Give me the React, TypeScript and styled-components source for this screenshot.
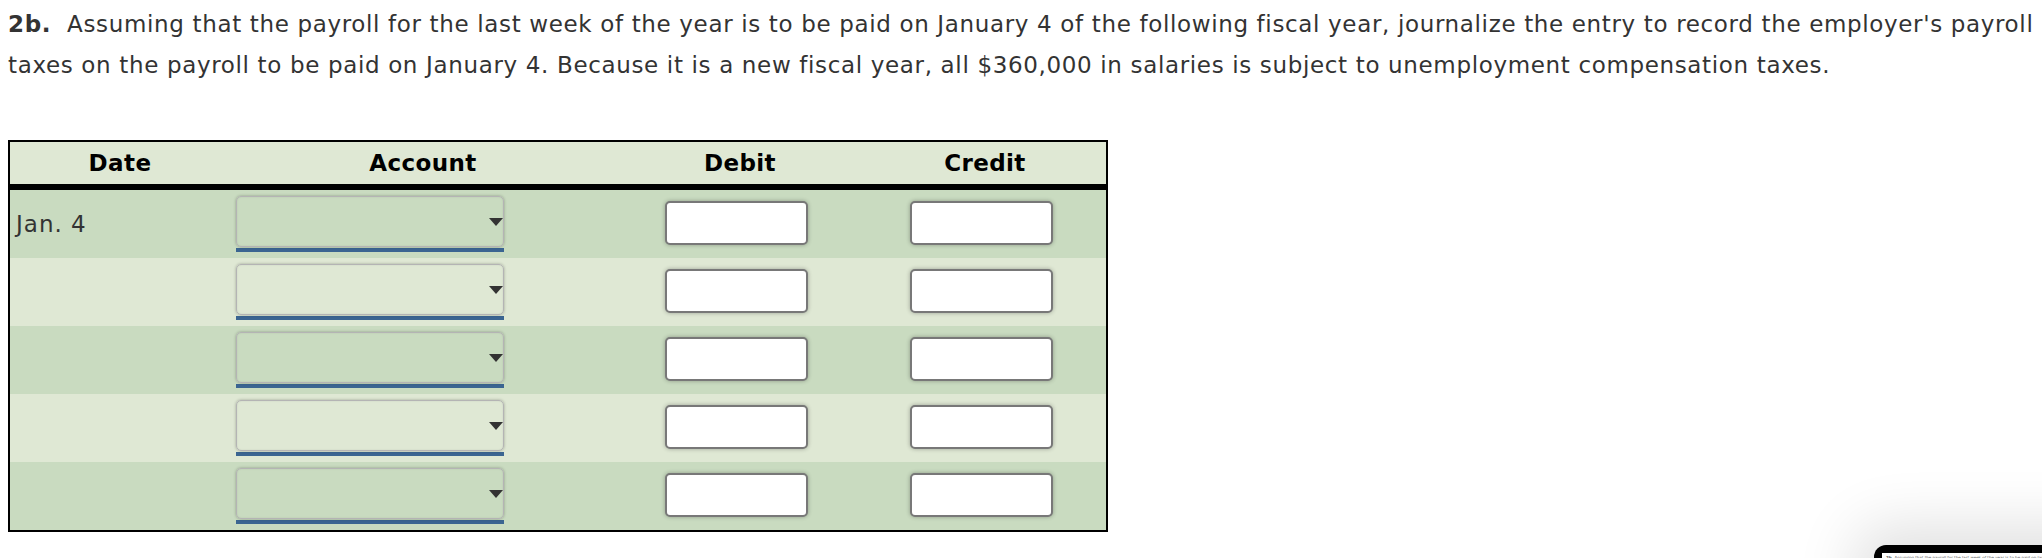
import React from "react";
import styled, { createGlobalStyle } from "styled-components";

const GlobalStyle = createGlobalStyle`
  html, body {
    margin: 0;
    padding: 0;
    background: #ffffff;
  }
  body {
    font-family: "DejaVu Sans", Verdana, sans-serif;
  }
`;

const Page = styled.div`
  position: relative;
  width: 2042px;
  height: 558px;
  overflow: hidden;
  box-sizing: border-box;
  padding: 4px 8px 0 8px;
`;

const Question = styled.p`
  margin: 0;
  font-size: 23px;
  letter-spacing: 0.65px;
  line-height: 41px;
  color: #333333;
`;

const Label = styled.strong`
  font-weight: bold;
`;

const Journal = styled.div`
  margin-top: 54px;
  width: 1100px;
  box-sizing: border-box;
  border: 2px solid #000000;
`;

const Row = styled.div<{ $tone: "head" | "dark" | "light" }>`
  display: grid;
  grid-template-columns: 220px 386px 248px 1fr;
  align-items: center;
  height: ${(p) => (p.$tone === "head" ? "42px" : "68px")};
  background: ${(p) => (p.$tone === "dark" ? "#c9dbc0" : "#dfe8d4")};
  border-bottom: ${(p) => (p.$tone === "head" ? "6px solid #000" : "none")};
`;

const HeadCell = styled.div`
  text-align: center;
  font-weight: bold;
  font-size: 23px;
  letter-spacing: 0.4px;
  color: #000000;
`;

const DateCell = styled.div`
  padding-left: 6px;
  font-size: 23px;
  letter-spacing: 1px;
  color: #333333;
`;

const AccountCell = styled.div`
  padding-left: 6px;
`;

const AmountCell = styled.div`
  display: flex;
  justify-content: center;
  padding-right: 8px;
`;

const SelectWrap = styled.div`
  position: relative;
  width: 268px;
  box-sizing: border-box;
  border-bottom: 4px solid #3b6591;

  &::after {
    content: "";
    position: absolute;
    right: 1px;
    top: 22px;
    width: 0;
    height: 0;
    border-left: 7px solid transparent;
    border-right: 7px solid transparent;
    border-top: 8px solid #333333;
    pointer-events: none;
  }
`;

const AccountSelect = styled.select`
  display: block;
  appearance: none;
  -webkit-appearance: none;
  width: 100%;
  height: 51px;
  margin: 0 0 1px 0;
  box-sizing: border-box;
  background: transparent;
  border: 1px solid #b4b4b4;
  border-radius: 5px;
  box-shadow: 0 0 3px rgba(0, 0, 0, 0.3), inset 0 0 2px rgba(0, 0, 0, 0.1);
  font-family: inherit;
  font-size: 20px;
  outline: none;
`;

const AmountInput = styled.input`
  width: 143px;
  height: 44px;
  box-sizing: border-box;
  border: 2px solid #787878;
  border-radius: 5px;
  background: #ffffff;
  box-shadow: 0 0 4px rgba(0, 0, 0, 0.3);
  font-family: inherit;
  font-size: 20px;
  outline: none;
  margin-top: -2px;
`;

const Preview = styled.div`
  position: absolute;
  left: 1874px;
  top: 545px;
  width: 320px;
  height: 80px;
  box-sizing: border-box;
  padding: 8px 0 0 8px;
  background: #000000;
  border-radius: 12px;
  box-shadow: 0 0 60px 20px rgba(0, 0, 0, 0.12);
`;

const PreviewSheet = styled.div`
  height: 100%;
  background: #ffffff;
  padding: 2px 0 0 4px;
  box-sizing: border-box;
  font-size: 4px;
  line-height: 5px;
  color: #555555;
  white-space: nowrap;
  overflow: hidden;
`;

type Line = { date: string };

const lines: Line[] = [
  { date: "Jan. 4" },
  { date: "" },
  { date: "" },
  { date: "" },
  { date: "" },
];

export default function App() {
  return (
    <>
      <GlobalStyle />
      <Page>
        <Question>
          <Label>2b.</Label>&nbsp; Assuming that the payroll for the last week of the
          year is to be paid on January 4 of the following fiscal year, journalize the
          entry to record the employer's payroll taxes on the payroll to be paid on
          January 4. Because it is a new fiscal year, all $360,000 in salaries is
          subject to unemployment compensation taxes.
        </Question>
        <Journal>
          <Row $tone="head">
            <HeadCell>Date</HeadCell>
            <HeadCell>Account</HeadCell>
            <HeadCell>Debit</HeadCell>
            <HeadCell>Credit</HeadCell>
          </Row>
          {lines.map((line, i) => (
            <Row key={i} $tone={i % 2 === 0 ? "dark" : "light"}>
              <DateCell>{line.date}</DateCell>
              <AccountCell>
                <SelectWrap>
                  <AccountSelect defaultValue="">
                    <option value=""></option>
                  </AccountSelect>
                </SelectWrap>
              </AccountCell>
              <AmountCell>
                <AmountInput type="text" />
              </AmountCell>
              <AmountCell>
                <AmountInput type="text" />
              </AmountCell>
            </Row>
          ))}
        </Journal>
        <Preview>
          <PreviewSheet>
            <b>2b.</b> Assuming that the payroll for the last week of the year is to be
            paid on January 4 of the following fiscal year
          </PreviewSheet>
        </Preview>
      </Page>
    </>
  );
}
